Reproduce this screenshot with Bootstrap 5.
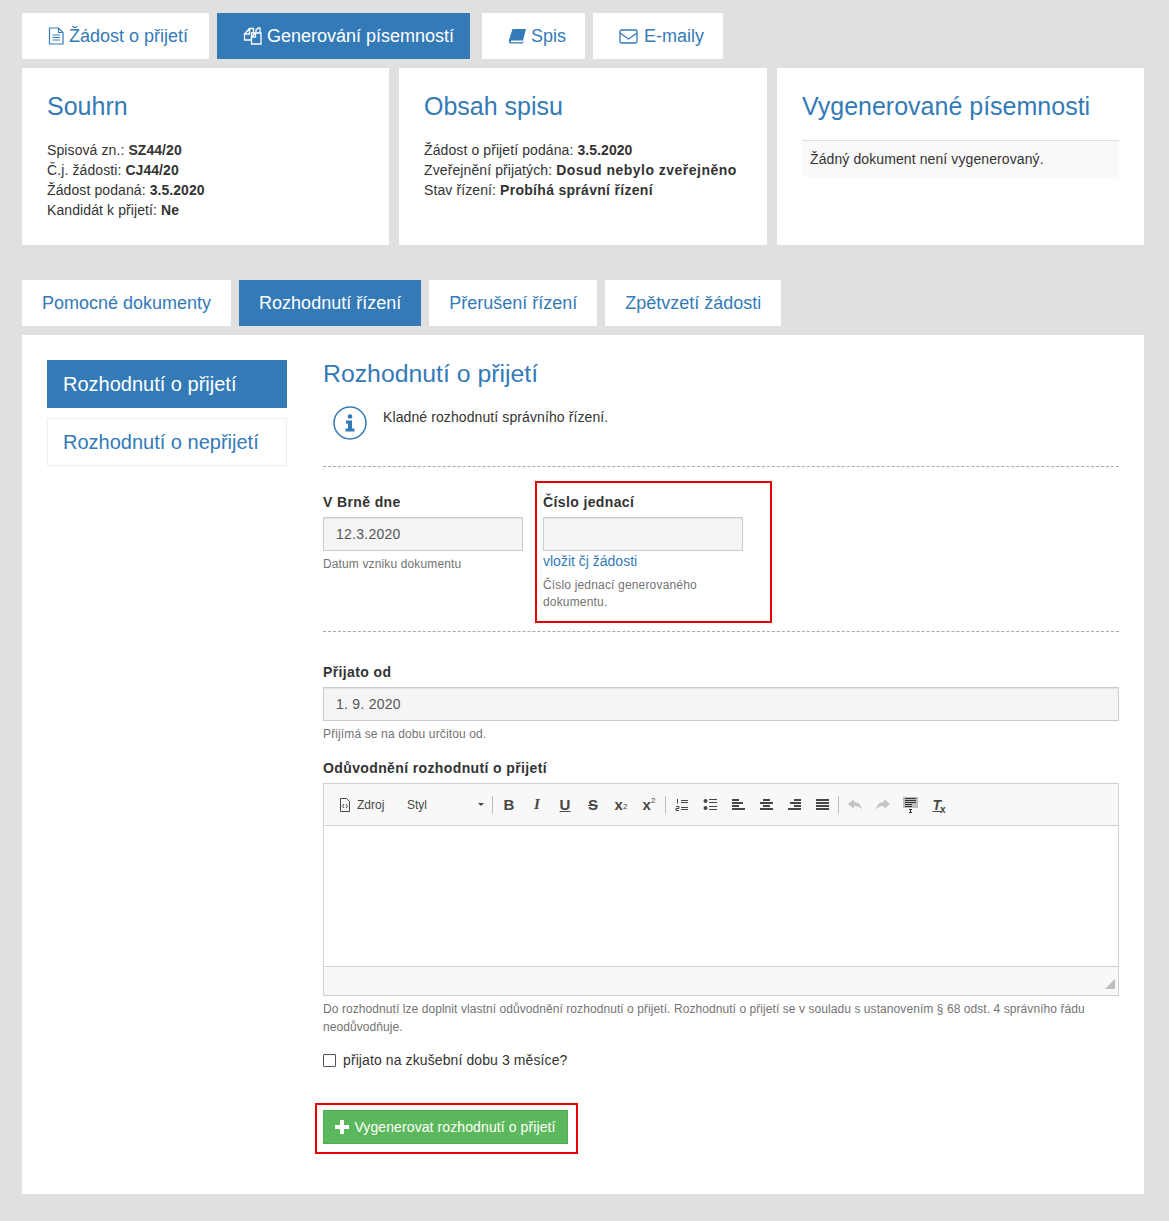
<!DOCTYPE html>
<html lang="cs">
<head>
    <meta charset="UTF-8">
    <meta name="viewport" content="width=device-width, initial-scale=1.0">
    <title>Rozhodnutí o přijetí</title>
    <link href="https://cdn.jsdelivr.net/npm/bootstrap@5.3.0/dist/css/bootstrap.min.css" rel="stylesheet">
    <style>
        body { background: #e0e0e0; font-family: "Liberation Sans", Arial, sans-serif; font-size: 14px; color: #333; line-height: 20px; letter-spacing: .1px; }
        a { color: #337ab7; text-decoration: none; }
        .page-wrap { padding: 13px 25px 27px 22px; }
        .tab-link { display: flex; align-items: center; height: 46px; background: #fff; color: #337ab7; font-size: 18px; white-space: nowrap; letter-spacing: 0; }
        .tab-link.on { background: #337ab7; color: #fff; }
        .tab-link svg { margin-right: 4px; }
        .top-tabs { margin-bottom: 9px; }
        .top-tabs .tab-link { padding: 0 0 0 26px; }
        .summary-grid { display: grid; grid-template-columns: 367px 368px 367px; column-gap: 10px; margin-bottom: 35px; }
        .summary-box { background: #fff; height: 177px; padding: 24px 25px 25px; }
        .summary-box h2 { font-size: 25px; line-height: 28px; font-weight: 400; color: #337ab7; margin: 0 0 20px; letter-spacing: 0; }
        .summary-box b { color: #333; letter-spacing: .05px; }
        .summary-box b.wide-bold { letter-spacing: .48px; }
        .summary-box b.mid-bold { letter-spacing: .3px; }
        .empty-note { background: #f9f9f9; border-top: 1px solid #ddd; padding: 8px; height: 37px; }
        .sub-tabs { margin-bottom: 9px; }
        .sub-tabs .tab-link { padding: 0 20px; }
        .main-panel { background: #fff; padding: 25px; display: flex; height: 859px; }
        .side-menu { width: 240px; flex: none; margin-right: 36px; }
        .side-item { display: flex; align-items: center; height: 48px; padding-left: 15px; font-size: 20px; border: 1px solid #eee; color: #337ab7; margin-bottom: 10px; letter-spacing: 0; }
        .side-item.on { background: #337ab7; border-color: #337ab7; color: #fff; }
        .form-area { flex: 1; min-width: 0; }
        .form-area h3 { font-size: 24.8px; line-height: 28px; font-weight: 400; color: #337ab7; margin: 0 0 1px; letter-spacing: 0; }
        .info-row { display: flex; height: 78px; padding: 13px 0 0 10px; border-bottom: 1px dashed #aaa; margin-bottom: 25px; }
        .info-row svg { margin: 4px 16px 0 0; flex: none; }
        .info-row p { margin: 5px 0 0; }
        .field-label { display: block; font-weight: 700; margin-bottom: 5px; height: 20px; letter-spacing: .38px; }
        .gray-input { height: 34px; width: 100%; background: #f5f5f5; border: 1px solid #ccc; padding: 0 12px; line-height: 32px; color: #555; box-shadow: inset 0 1px 1px rgba(0,0,0,.075); letter-spacing: .25px; }
        .short-input { width: 200px; }
        .help-line { font-size: 12px; line-height: 17px; color: #737373; letter-spacing: .13px; }
        .date-row { display: flex; height: 140px; border-bottom: 1px dashed #aaa; margin-bottom: 30px; }
        .date-col { width: 200px; margin-right: 12px; }
        .red-box { border: 2px solid #e60000; }
        .cj-box { width: 237px; height: 142px; margin-top: -11px; padding: 9px 6px 0; position: relative; }
        .cj-box a { display: block; letter-spacing: 0; }
        .mt-help { margin-top: 5px; }
        .cj-box .help-line { margin-top: 6px; letter-spacing: .17px; }
        .editor-box { border: 1px solid #d1d1d1; height: 213px; margin-top: 5px; display: flex; flex-direction: column; }
        .editor-bar { height: 42px; background: #f8f8f8; border-bottom: 1px solid #d1d1d1; display: flex; align-items: center; padding-left: 15px; color: #474747; letter-spacing: 0; }
        .editor-body { flex: 1; background: #fff; }
        .editor-foot { height: 29px; background: #f8f8f8; border-top: 1px solid #d1d1d1; display: flex; justify-content: flex-end; align-items: flex-end; padding: 0 3px 6px 0; }
        .src-btn { font-size: 12px; display: flex; align-items: center; width: 68px; }
        .src-btn svg { margin-right: 6px; }
        .style-drop { font-size: 12px; width: 83px; padding-right: 6px; display: flex; justify-content: space-between; align-items: center; }
        .caret-down { width: 0; height: 0; border: 3px solid transparent; border-top: 3px solid #474747; border-bottom: 0; }
        .bar-sep { width: 1px; height: 18px; background: #bcbcbc; margin: 0 2px; }
        .bar-btn { width: 28px; height: 20px; display: flex; align-items: center; justify-content: center; font-size: 15px; font-weight: 700; line-height: 1; }
        .bar-btn sub, .bar-btn sup { font-size: 8px; font-weight: 400; line-height: 0; }
        .serif-glyph { font-family: "Liberation Serif", serif; font-style: italic; }
        .clear-t { font-family: "Liberation Sans", sans-serif; font-style: italic; font-size: 14px; text-decoration: underline; }
        .clear-x { font-size: 10px; align-self: flex-end; margin-left: -1px; }
        .long-help { margin-top: 4px; line-height: 18px; letter-spacing: .07px; }
        .check-row { display: flex; align-items: center; margin-top: 14px; }
        .check-mark { width: 13px; height: 13px; border: 1px solid #555; border-radius: 1px; margin-right: 7px; background: #fff; }
        .gen-box { width: 263px; height: 51px; margin: 33px 0 0 -8px; padding: 5px 6px; }
        .gen-btn { width: 245px; height: 34px; background: #5cb85c; border: 1px solid #4cae4c; color: #fff; display: flex; align-items: center; justify-content: center; font-size: 14px; padding: 0; border-radius: 0; letter-spacing: .1px; }
        .gen-btn svg { margin-right: 5px; }
    </style>
</head>
<body>
<div class="page-wrap">
    <!-- Top tabs -->
    <div class="d-flex top-tabs">
        <a class="tab-link me-2" href="#" style="width:187px">
            <svg width="17" height="18" viewBox="0 0 17 18" fill="none" stroke="currentColor" stroke-width="1.2"><path d="M1.500 1h9l4.500 4.500V17H1.500zM10.500 1v4.500H15M4.500 8h7.500M4.500 10.500h7.500M4.500 13h7.500"/></svg>Žádost o přijetí</a>
        <a class="tab-link on" href="#" style="width:253px;margin-right:12px">
            <svg width="20" height="18" viewBox="0 0 20 18" fill="none" stroke="currentColor" stroke-width="1.3"><path d="M8 13H1.500V7l5-5.500h4V6M6.500 1.500V7h-5M8.500 17V6H18v11zM8.500 10l4-4v4zM13 6V3l2-2h2v5"/></svg>Generování písemností</a>
        <a class="tab-link me-2" href="#" style="width:103px">
            <svg width="19" height="16" viewBox="0 0 19 16"><path fill="currentColor" d="M4.500 1H18l-3 11.500H3.500c-1 0-1.300 1.700 0 1.700h11l.7-1.500.5.500-1 2.300H3c-2 0-2.500-1.700-2-3.500z"/></svg>Spis</a>
        <a class="tab-link" href="#" style="width:130px">
            <svg width="19" height="15" viewBox="0 0 19 15" fill="none" stroke="currentColor" stroke-width="1.300" style="margin-right:6px"><rect x="1" y="1" width="17" height="13" rx="1.500"/><path d="M1 4l8.500 6L18 4"/></svg>E-maily</a>
    </div>

    <!-- Summary -->
    <div class="summary-grid">
        <div class="summary-box">
            <h2>Souhrn</h2>
            <div>Spisová zn.: <b>SZ44/20</b></div>
            <div>Č.j. žádosti: <b>CJ44/20</b></div>
            <div>Žádost podaná: <b>3.5.2020</b></div>
            <div>Kandidát k přijetí: <b>Ne</b></div>
        </div>
        <div class="summary-box">
            <h2>Obsah spisu</h2>
            <div>Žádost o přijetí podána: <b>3.5.2020</b></div>
            <div>Zveřejnění přijatých: <b class="wide-bold">Dosud nebylo zveřejněno</b></div>
            <div>Stav řízení: <b class="mid-bold">Probíhá správní řízení</b></div>
        </div>
        <div class="summary-box">
            <h2>Vygenerované písemnosti</h2>
            <div class="empty-note">Žádný dokument není vygenerovaný.</div>
        </div>
    </div>

    <!-- Sub tabs -->
    <div class="d-flex sub-tabs">
        <a class="tab-link me-2" href="#">Pomocné dokumenty</a>
        <a class="tab-link on me-2" href="#">Rozhodnutí řízení</a>
        <a class="tab-link me-2" href="#">Přerušení řízení</a>
        <a class="tab-link" href="#">Zpětvzetí žádosti</a>
    </div>

    <div class="main-panel">
        <div class="side-menu">
            <a class="side-item on" href="#">Rozhodnutí o přijetí</a>
            <a class="side-item" href="#">Rozhodnutí o nepřijetí</a>
        </div>
        <div class="form-area">
            <h3>Rozhodnutí o přijetí</h3>
            <div class="info-row">
                <svg width="34" height="34" viewBox="0 0 34 34"><circle cx="17" cy="17" r="16" fill="none" stroke="#337ab7" stroke-width="1.500"/><circle cx="17" cy="10.500" r="2.300" fill="#337ab7"/><path fill="#337ab7" d="M13 14.500h6v8h2.500v3h-9v-3H15v-5h-2z"/></svg>
                <p>Kladné rozhodnutí správního řízení.</p>
            </div>

            <div class="date-row">
                <div class="date-col">
                    <label class="field-label">V Brně dne</label>
                    <div class="gray-input">12.3.2020</div>
                    <div class="help-line mt-help">Datum vzniku dokumentu</div>
                </div>
                <div class="red-box cj-box">
                    <label class="field-label">Číslo jednací</label>
                    <div class="gray-input short-input"></div>
                    <a href="#">vložit čj žádosti</a>
                    <div class="help-line">Číslo jednací generovaného<br>dokumentu.</div>
                </div>
            </div>

            <label class="field-label">Přijato od</label>
            <div class="gray-input">1. 9. 2020</div>
            <div class="help-line mt-help" style="margin-bottom:15px">Přijímá se na dobu určitou od.</div>

            <label class="field-label">Odůvodnění rozhodnutí o přijetí</label>
            <div class="editor-box">
                <div class="editor-bar">
                    <span class="src-btn">
                        <svg width="12" height="14" viewBox="0 0 12 14" fill="none" stroke="#474747"><path d="M1.500 .5h6l3 3v10h-9zM5 6L3.500 8 5 10M7 6l1.500 2L7 10"/></svg>Zdroj</span>
                    <span class="style-drop">Styl<i class="caret-down"></i></span>
                    <span class="bar-sep"></span>
                    <span class="bar-btn">B</span>
                    <span class="bar-btn serif-glyph">I</span>
                    <span class="bar-btn text-decoration-underline">U</span>
                    <span class="bar-btn text-decoration-line-through">S</span>
                    <span class="bar-btn">x<sub>2</sub></span>
                    <span class="bar-btn">x<sup>2</sup></span>
                    <span class="bar-sep"></span>
                    <span class="bar-btn"><svg width="14" height="13" viewBox="0 0 14 13" fill="none" stroke="#474747"><path d="M6 2.500h7M6 4.500h7M6 9.500h7M6 11.500h7M2.500 1v4.500M1 8.500h3v2H1v2h3"/></svg></span>
                    <span class="bar-btn"><svg width="14" height="13" viewBox="0 0 14 13" fill="none" stroke="#474747"><circle cx="2.500" cy="3" r="2" fill="#474747" stroke="none"/><circle cx="2.500" cy="10" r="2" fill="#474747" stroke="none"/><path d="M6 1.500h8M6 4.500h8M6 8.500h8M6 11.500h8"/></svg></span>
                    <span class="bar-btn"><svg width="13" height="12" viewBox="0 0 13 12"><path fill="#474747" d="M0 0h7v2H0zM0 3h11v2H0zM0 6h7v2H0zM0 9h13v2H0z"/></svg></span>
                    <span class="bar-btn"><svg width="13" height="12" viewBox="0 0 13 12"><path fill="#474747" d="M3 0h7v2H3zM0 3h13v2H0zM3 6h7v2H3zM0 9h13v2H0z"/></svg></span>
                    <span class="bar-btn"><svg width="13" height="12" viewBox="0 0 13 12"><path fill="#474747" d="M6 0h7v2H6zM2 3h11v2H2zM6 6h7v2H6zM0 9h13v2H0z"/></svg></span>
                    <span class="bar-btn"><svg width="13" height="12" viewBox="0 0 13 12"><path fill="#474747" d="M0 0h13v2H0zM0 3h13v2H0zM0 6h13v2H0zM0 9h13v2H0z"/></svg></span>
                    <span class="bar-sep"></span>
                    <span class="bar-btn"><svg width="14" height="12" viewBox="0 0 14 12"><path fill="#c4c4c4" d="M0 5l6-5v3c5 0 7.500 3.500 8 8-1.500-3-4-4-8-4v3z"/></svg></span>
                    <span class="bar-btn"><svg width="14" height="12" viewBox="0 0 14 12"><path fill="#c4c4c4" d="M14 5L8 0v3C3 3 .5 6.500 0 11c1.500-3 4-4 8-4v3z"/></svg></span>
                    <span class="bar-btn"><svg width="16" height="16" viewBox="0 0 16 16"><rect width="15" height="11" fill="#bdbdbd"/><path fill="none" stroke="#333" d="M2 1.500h11M2 3.500h11M2 5.500h11M2 7.500h7M2 9.500h7M6 12.500h3M7.500 12.500v3M6 15.500h3"/></svg></span>
                    <span class="bar-btn"><span class="clear-t">T</span><span class="clear-x">x</span></span>
                </div>
                <div class="editor-body"></div>
                <div class="editor-foot"><svg width="10" height="10" viewBox="0 0 10 10"><path fill="#bcbcbc" d="M10 0v10H0z"/></svg></div>
            </div>
            <div class="help-line long-help">Do rozhodnutí lze doplnit vlastní odůvodnění rozhodnutí o přijetí. Rozhodnutí o přijetí se v souladu s ustanovením § 68 odst. 4 správního řádu neodůvodňuje.</div>
            <div class="check-row"><span class="check-mark"></span>přijato na zkušební dobu 3 měsíce?</div>
            <div class="red-box gen-box">
                <button class="btn gen-btn" type="button"><svg width="14" height="14" viewBox="0 0 14 14"><path fill="#fff" d="M5 0h4v5h5v4H9v5H5V9H0V5h5z"/></svg>Vygenerovat rozhodnutí o přijetí</button>
            </div>
        </div>
    </div>
</div>
</body>
</html>
